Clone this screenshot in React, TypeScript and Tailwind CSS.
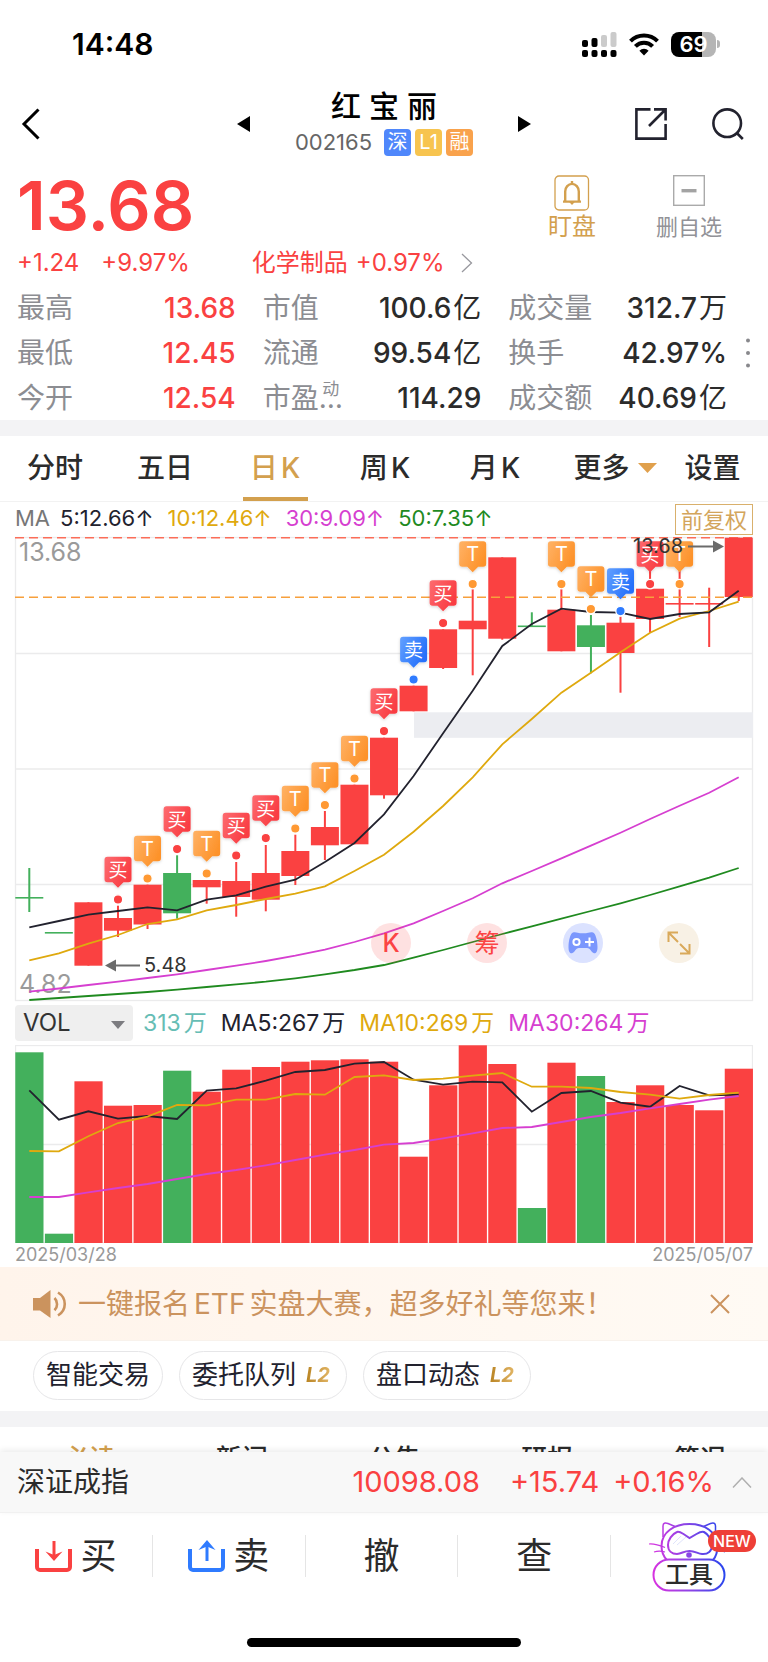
import React, { useState } from "react";

const RED = "#fa4141";
const GREEN = "#43b05c";
const INK = "#22222e";
const GOLD = "#dfa90e";
const PINK = "#d63fd0";
const DEEP_GREEN = "#1f8a1f";

interface Candle {
  top: number;
  bottom: number;
  high: number;
  low: number;
  up: boolean;
}

const c = (top: number, bottom: number, high: number, low: number, up = true): Candle => ({ top, bottom, high, low, up });

const candles: Candle[] = [
  c(360, 361, 331, 375, false),
  c(395, 396, 395, 396, false),
  c(365.3, 428.7, 365.3, 428.7),
  c(381, 393.7, 368.7, 400),
  c(347.7, 387.5, 347.7, 392),
  c(336, 376.3, 318.3, 381.7, false),
  c(343, 350.3, 343, 366.7),
  c(344, 360, 325, 379.7),
  c(336, 362.7, 308, 374.3),
  c(314, 339, 297.7, 348),
  c(290, 308.3, 274, 323),
  c(247.7, 307.3, 247.7, 307.3),
  c(200.7, 258.3, 200.7, 261.7),
  c(148.7, 174.3, 148.7, 174.3),
  c(92.3, 131, 92.3, 132),
  c(83.7, 92.3, 51.3, 138.3),
  c(20.3, 101.7, 20.3, 102.7),
  c(88.5, 89.5, 75.3, 89, false),
  c(72.7, 114.3, 51.3, 114.3),
  c(88.3, 110, 78, 136.3, false),
  c(85.7, 116, 79.7, 155.7),
  c(51.7, 82, 34, 95.7),
  c(66, 67, 34, 80),
  c(66, 67, 50.7, 110),
  c(0.7, 60, 0.7, 64),
];

const ma5 = [390.3, 384, 377.7, 374, 370.3, 373.3, 362.7, 358.3, 349.7, 342.7, 325, 306, 277.3, 239, 196.3, 153.7, 109, 87, 71.7, 75, 75.7, 82, 77, 75.3, 53.7];
const ma10 = [423.3, 416.3, 406.7, 398, 387, 382.3, 373.3, 368, 362, 356.7, 349.3, 334, 317.7, 294.7, 269, 240.3, 207.3, 182, 155.7, 135.7, 115.3, 95.7, 81.7, 74, 64.7];
const ma30 = [454.7, 451.5, 448, 444.7, 441, 437.3, 433, 428.7, 424, 418.7, 412.7, 405, 396.3, 386.3, 374, 361.3, 346.3, 334, 321.3, 308.7, 295.7, 282, 268.7, 255.7, 240.3];
const ma50 = [463, 461, 459, 457, 455, 452.7, 450, 447.3, 444.7, 441.3, 437.3, 433, 428, 420.7, 413, 405, 397, 389.3, 381.7, 374, 366.3, 358, 349.3, 340.7, 331];

type MarkKind = "买" | "卖" | "T";

const marks: { i: number; y: number; kind: MarkKind }[] = [
  { i: 3, y: 319.7, kind: "买" },
  { i: 4, y: 298.7, kind: "T" },
  { i: 5, y: 269.3, kind: "买" },
  { i: 6, y: 293.7, kind: "T" },
  { i: 7, y: 275.7, kind: "买" },
  { i: 8, y: 258.3, kind: "买" },
  { i: 9, y: 248.7, kind: "T" },
  { i: 10, y: 225.3, kind: "T" },
  { i: 11, y: 198.7, kind: "T" },
  { i: 12, y: 151.3, kind: "买" },
  { i: 13, y: 99.7, kind: "卖" },
  { i: 14, y: 43.3, kind: "买" },
  { i: 15, y: 4.3, kind: "T" },
  { i: 18, y: 4.3, kind: "T" },
  { i: 19, y: 29.3, kind: "T" },
  { i: 20, y: 31.3, kind: "卖" },
  { i: 21, y: 4.3, kind: "买" },
  { i: 22, y: 4.3, kind: "T" },
];

const markStyle = {
  "买": { fill: "url(#markBuy)", dot: "#fa4141" },
  "卖": { fill: "url(#markSell)", dot: "#2f7bff" },
  T: { fill: "url(#markT)", dot: "#ff9933" },
};

const volTops = [7.3, 188.7, 36.3, 60.7, 60, 25.7, 46.7, 24.7, 22, 16.7, 15.3, 14.3, 16.7, 111.7, 40.3, 0.3, 19, 163, 17.7, 31, 57, 40.3, 60, 65.3, 23.7];
const volMa5 = [45.3, 74.7, 66.3, 73.7, 71, 74, 45.7, 43.3, 35.7, 27, 25, 18.7, 17, 34.7, 39.7, 36.7, 37.3, 66.7, 48, 46, 57.7, 61.7, 41, 50.3, 49.7];
const volMa10 = [106, 106.3, 91.3, 78, 71.7, 60, 60.3, 54.7, 54.7, 49, 49.7, 32, 30.3, 35, 33.7, 30.7, 28, 41.7, 41.7, 43, 47, 49.7, 53.7, 50, 47.7];
const volMa30 = [152, 152, 147.3, 143, 139, 134, 129, 125, 120.3, 115, 109.7, 105, 99.7, 98, 93.3, 88.3, 83, 82, 77, 72, 68, 63.3, 59, 54.7, 51];

const xAt = (i: number) => 14.3 + i * 29.56;
const toPoints = (ys: number[]) => ys.map((y, i) => `${xAt(i).toFixed(1)},${y}`).join(" ");

const stats = [
  { label: "最高", value: "13.68", red: true },
  { label: "市值", value: "100.6", unit: "亿" },
  { label: "成交量", value: "312.7", unit: "万" },
  { label: "最低", value: "12.45", red: true },
  { label: "流通", value: "99.54", unit: "亿" },
  { label: "换手", value: "42.97%" },
  { label: "今开", value: "12.54", red: true },
  { label: "市盈", value: "114.29", sup: "动" },
  { label: "成交额", value: "40.69", unit: "亿" },
];

function StatusBar() {
  return (
    <div className="flex h-[88px] items-center justify-between pl-[72px] pr-12">
      <span className="text-[30px] font-semibold leading-8 text-black">14:48</span>
      <div className="flex items-center gap-3">
        <svg width="35" height="25" viewBox="0 0 35 25">
          <rect x="0" y="8" width="6" height="7" rx="2" />
          <rect x="9.5" y="6" width="6" height="9" rx="2" />
          <rect x="19" y="3" width="6" height="12" rx="2" fill="#cbcbcb" />
          <rect x="28.5" y="0" width="6" height="15" rx="2" fill="#cbcbcb" />
          {[0, 9.5, 19, 28.5].map((x) => (
            <rect key={x} x={x} y="18" width="6" height="7" rx="2" />
          ))}
        </svg>
        <svg width="30" height="23" viewBox="0 0 30 23" fill="none" stroke="#000" strokeWidth="4">
          <path d="M1.5 8.2a19 19 0 0 1 27 0" />
          <path d="M6.4 13.3a12 12 0 0 1 17.2 0" />
          <path d="M15 22.6l-4.6-4.8a6.4 6.4 0 0 1 9.2 0z" fill="#000" stroke="none" />
        </svg>
        <div className="flex items-center gap-px">
          <div className="flex h-[25px] w-[45px] items-center justify-center rounded-lg bg-linear-to-r from-black from-69% to-[#b5b5b5] to-69% text-[22px] font-semibold leading-6 text-white">
            69
          </div>
          <span className="h-2 w-[3px] rounded-r-full bg-[#b5b5b5]" />
        </div>
      </div>
    </div>
  );
}

function Header() {
  return (
    <header className="grid h-[77px] grid-cols-[1fr_268px_1fr] text-black">
      <div className="flex items-center justify-between pb-[5px] pl-[21px]">
        <button aria-label="返回">
          <svg width="20" height="32" viewBox="0 0 20 32" fill="none" stroke="#000" strokeWidth="3">
            <path d="M17.5 1.5L3 16l14.5 14.5" />
          </svg>
        </button>
        <button aria-label="上一只">
          <svg width="13" height="16" viewBox="0 0 13 16"><path d="M13 0v16L0 8z" /></svg>
        </button>
      </div>
      <div className="flex flex-col items-center">
        <h1 className="text-[30px] font-medium leading-9">红 宝 丽</h1>
        <div className="mt-1 flex items-center gap-1 text-[20px] leading-7 text-white">
          <span className="mr-2 text-[22px] text-[#666]">002165</span>
          <span className="flex size-[27px] items-center justify-center rounded-sm bg-[#4f87fb]">深</span>
          <span className="flex size-[27px] items-center justify-center rounded-sm bg-[#f7c44f]">L1</span>
          <span className="flex size-[27px] items-center justify-center rounded-sm bg-[#f9a24c]">融</span>
        </div>
      </div>
      <div className="flex items-center justify-between pb-[5px] pr-6">
        <button aria-label="下一只">
          <svg width="13" height="16" viewBox="0 0 13 16"><path d="M0 0v16l13-8z" /></svg>
        </button>
        <div className="flex items-center gap-[45px]">
          <button aria-label="分享">
            <svg width="32" height="32" viewBox="0 0 32 32" fill="none" stroke="#22222e" strokeWidth="2.6">
              <path d="M15.5 1.4H1.4v29.2h29.2V16" />
              <path d="M19 1.4h11.6V12.6M30 2L14 18" />
            </svg>
          </button>
          <button aria-label="搜索">
            <svg width="32" height="32" viewBox="0 0 32 32" fill="none" stroke="#22222e" strokeWidth="2.6">
              <circle cx="15.2" cy="15.2" r="13.8" />
              <path d="M24.8 25l6 6" />
            </svg>
          </button>
        </div>
      </div>
    </header>
  );
}

function Quote() {
  return (
    <section className="pl-[17px]">
      <div className="flex h-20 justify-between pr-[46px]">
        <span className="text-[68px] font-semibold leading-20 text-[#fa4141]">13.68</span>
        <div className="flex items-start gap-[60px] pt-[10px]">
          <button className="flex flex-col items-center text-[24px] leading-8 text-[#d3a04e]">
            <svg width="36" height="36" viewBox="0 0 36 36" fill="none" stroke="#d3a04e">
              <rect x="1" y="1" width="33.5" height="34" rx="4" strokeWidth="1.3" />
              <path d="M9 26.6h18M11.2 26v-9.5a6.8 7.6 0 0 1 13.6 0V26" strokeWidth="2.4" />
              <path d="M18 6v3" strokeWidth="2.4" />
              <path d="M15.2 27h5.6l-2.8 3z" fill="#d3a04e" stroke="none" />
            </svg>
            盯盘
          </button>
          <button className="flex flex-col items-center text-[22px] leading-8 text-[#929297]">
            <svg width="32" height="36" viewBox="0 0 32 36">
              <rect x="0.7" y="0.7" width="30.6" height="29.6" fill="none" stroke="#aaa" strokeWidth="1.4" />
              <rect x="8.5" y="14" width="15" height="3.4" fill="#a3a3a3" />
            </svg>
            删自选
          </button>
        </div>
      </div>
      <div className="mt-[2px] flex items-center text-[24px] leading-8 text-[#fa4141]">
        <span>+1.24</span>
        <span className="ml-[22px]">+9.97%</span>
        <a href="#sector" className="ml-[62px] flex items-center gap-2">
          <span>化学制品</span>
          <span>+0.97%</span>
          <svg className="ml-2" width="12" height="20" viewBox="0 0 12 20" fill="none" stroke="#98989e" strokeWidth="1.3">
            <path d="M1 1l9.5 9L1 19" />
          </svg>
        </a>
      </div>
      <div className="mt-[6px] flex items-center">
        <dl className="grid flex-1 grid-cols-3 gap-x-[27px]">
          {stats.map((s) => (
            <div key={s.label} className="flex h-[45px] items-center justify-between text-[28px] leading-8">
              <dt className="flex text-[#8c8d92]">
                {s.label}
                {s.sup && (
                  <span className="flex flex-col items-center leading-[4px]">
                    <span className="text-[17px] leading-[14px]">{s.sup}</span>
                    …
                  </span>
                )}
              </dt>
              <dd className={s.red ? "font-medium text-[#fa4141]" : "font-medium text-[#2b2b2b]"}>
                {s.value}
                {s.unit && <span className="ml-[2px] font-normal">{s.unit}</span>}
              </dd>
            </div>
          ))}
        </dl>
        <button aria-label="更多数据" className="flex w-[41px] justify-center">
          <svg width="4" height="30" viewBox="0 0 4 30" fill="#88888c">
            <circle cx="2" cy="2.5" r="2" />
            <circle cx="2" cy="15" r="2" />
            <circle cx="2" cy="27.5" r="2" />
          </svg>
        </button>
      </div>
    </section>
  );
}

function PeriodTabs() {
  const [active, setActive] = useState("日K");
  const items = ["分时", "五日", "日K", "周K", "月K", "更多", "设置"];

  return (
    <nav className="grid h-[66px] grid-cols-[110fr_110fr_110fr_110fr_110fr_130fr_65fr] border-b border-[#f2f2f2] pr-[23px] text-[28px] font-medium leading-8">
      {items.map((t) => (
        <button
          key={t}
          onClick={() => setActive(t)}
          className={`flex flex-col items-center justify-between pt-4 ${t === active ? "text-[#d3a04e]" : "text-[#2b2b2b]"}`}
        >
          <span className="flex items-center gap-2 whitespace-nowrap">
            {t.endsWith("K") ? (
              <span className="flex gap-[3px]">
                <span>{t[0]}</span>
                <span>K</span>
              </span>
            ) : (
              t
            )}
            {t === "更多" && (
              <svg width="19" height="10" viewBox="0 0 19 10"><path d="M0 0h19l-9.5 10z" fill="#e0a04c" /></svg>
            )}
          </span>
          <span className={`h-1 w-[65px] ${t === active ? "bg-[#d3a04e]" : "bg-transparent"}`} />
        </button>
      ))}
    </nav>
  );
}

function KChart() {
  return (
    <svg className="block h-auto w-full overflow-visible" viewBox="0 0 738 464">
      <defs>
        <linearGradient id="markBuy" x1="0" x2="1" y1="0" y2="0.5">
          <stop offset="0" stopColor="#fd6b70" />
          <stop offset="1" stopColor="#f93c42" />
        </linearGradient>
        <linearGradient id="markSell" x1="0" x2="1" y1="0" y2="0.5">
          <stop offset="0" stopColor="#62a0ff" />
          <stop offset="1" stopColor="#2570fb" />
        </linearGradient>
        <linearGradient id="markT" x1="0" x2="1" y1="0" y2="0.5">
          <stop offset="0" stopColor="#ffb266" />
          <stop offset="1" stopColor="#fd9229" />
        </linearGradient>
        <filter id="soft" x="-30%" y="-30%" width="160%" height="160%">
          <feDropShadow dx="0" dy="1" stdDeviation="1.5" floodOpacity="0.18" />
        </filter>
      </defs>

      <g stroke="#ebebec" strokeWidth="1.3" fill="none">
        <rect x="0.5" y="0.5" width="737" height="463" />
        <path d="M0 116.5h738M0 232h738M0 347.5h738" />
      </g>
      <rect x="399" y="175.3" width="339" height="25.5" fill="#ecedf1" />
      <path d="M0 0.8h738" stroke="#fb6d58" strokeWidth="1.6" strokeDasharray="9 5" />

      <text x="4" y="23.5" fontSize="25" fill="#9a9a9a">13.68</text>
      <text x="4" y="456" fontSize="25" fill="#9a9a9a">4.82</text>

      {candles.map((k, i) => (
        <g key={i} fill={k.up ? RED : GREEN}>
          <rect x={xAt(i) - 1} y={k.high} width="2" height={k.low - k.high} />
          <rect x={xAt(i) - 14} y={k.top} width="28" height={Math.max(k.bottom - k.top, 1.6)} />
        </g>
      ))}
      <path d="M0 60.3h738" stroke="#f7a03c" strokeWidth="1.6" strokeDasharray="9 5" />

      <g fill="none" strokeWidth="1.8">
        <polyline points={toPoints(ma50)} stroke={DEEP_GREEN} />
        <polyline points={toPoints(ma30)} stroke={PINK} />
        <polyline points={toPoints(ma10)} stroke={GOLD} />
        <polyline points={toPoints(ma5)} stroke={INK} />
      </g>

      {marks.map((m) => (
        <g key={m.i} transform={`translate(${xAt(m.i).toFixed(1)} ${m.y})`}>
          <path
            d="M-10.5 0h21a3 3 0 0 1 3 3v19.5a3 3 0 0 1-3 3H5.5L0 31l-5.5-5.5H-10.5a3 3 0 0 1-3-3V3a3 3 0 0 1 3-3z"
            fill={markStyle[m.kind].fill}
            filter="url(#soft)"
          />
          <text x="0" y={m.kind === "T" ? 20 : 20.5} textAnchor="middle" fontSize={m.kind === "T" ? 20 : 19} fill="#fff">
            {m.kind}
          </text>
          <circle cx="0" cy="42.8" r="4.7" fill={markStyle[m.kind].dot} stroke="#fff" strokeWidth="1.3" />
        </g>
      ))}

      <g stroke="#6b6b6b" strokeWidth="2" fill="#6b6b6b">
        <path d="M100 428.5h25" />
        <path d="M90 428.5l11-6v12z" stroke="none" />
        <path d="M673 9.5h26" />
        <path d="M709 9.5l-11-6v12z" stroke="none" />
      </g>
      <text x="129" y="434.5" fontSize="20" fill="#333">5.48</text>
      <text x="618" y="15.5" fontSize="20" fill="#333">13.68</text>
    </svg>
  );
}

function VolChart() {
  return (
    <svg className="block h-auto w-full" viewBox="0 0 738 198">
      <g stroke="#ebebec" strokeWidth="1.3" fill="none">
        <rect x="0.5" y="0.5" width="737" height="197" />
        <path d="M0 99.5h738" />
      </g>
      {volTops.map((y, i) => (
        <rect key={i} x={xAt(i) - 14} y={y} width="28.2" height={198 - y} fill={candles[i].up ? RED : GREEN} />
      ))}
      <g fill="none" strokeWidth="1.8">
        <polyline points={toPoints(volMa5)} stroke={INK} />
        <polyline points={toPoints(volMa10)} stroke={GOLD} />
        <polyline points={toPoints(volMa30)} stroke={PINK} />
      </g>
    </svg>
  );
}

function FloatingTools() {
  return (
    <div className="absolute bottom-[38px] right-[54px] flex gap-14 text-[25px] leading-8 text-[#fb4444]">
      <button className="flex size-10 items-center justify-center rounded-full bg-[#fb4444]/16 font-medium">K</button>
      <button className="flex size-10 items-center justify-center rounded-full bg-[#fb4444]/16">筹</button>
      <button aria-label="游戏" className="flex size-10 items-center justify-center rounded-full bg-[#dbe2ff]">
        <svg width="30" height="22" viewBox="0 0 30 22">
          <path d="M5 .5c3-.8 5.5.8 7 .8h6c1.5 0 4-1.6 7-.8 2.4.8 4.5 7.5 4.5 14.5 0 5-1.5 6.5-3.5 6.2-2.5-.4-3.5-5.2-7-5.2h-8c-3.5 0-4.5 4.8-7 5.2C2 21.5.5 20 .5 15 .5 8 2.6 1.3 5 .5z" fill="#7b97fd" />
          <circle cx="8.5" cy="10" r="3.1" fill="none" stroke="#fff" strokeWidth="2" />
          <path d="M21.5 5.5v9M17 10h9" stroke="#fff" strokeWidth="2" />
        </svg>
      </button>
      <button aria-label="全屏" className="flex size-10 items-center justify-center rounded-full bg-[#f8f1e5]">
        <svg width="24" height="24" viewBox="0 0 24 24" fill="none" stroke="#d9a95a" strokeWidth="2">
          <path d="M1.5 11V1.5H11M2 2l9 9M22.5 13v9.5H13M22 22l-9-9" />
        </svg>
      </button>
    </div>
  );
}

function VolValue({ text, className }: { text: string; className: string }) {
  return (
    <span className={className}>
      {text}
      <span className="ml-[3px]">万</span>
    </span>
  );
}

function Charts() {
  const [indicator, setIndicator] = useState("VOL");

  return (
    <section className="px-[15px]">
      <div className="flex h-[35px] items-center justify-between text-[22px] leading-8">
        <div className="flex gap-[14px] pb-1">
          <span className="text-[#22222e]">
            <span className="mr-[10px] text-[#777]">MA</span>
            5:12.66↑
          </span>
          <span className="text-[#dfa90e]">10:12.46↑</span>
          <span className="text-[#d63fd0]">30:9.09↑</span>
          <span className="text-[#1f8a1f]">50:7.35↑</span>
        </div>
        <button className="h-[31px] border border-[#d9b06c] px-[5px] leading-7 text-[#d3a55c]">前复权</button>
      </div>

      <div className="relative">
        <KChart />
        <FloatingTools />
      </div>

      <div className="flex h-11 items-center gap-[14px] text-[23px] leading-8">
        <div className="relative -mr-1">
          <select
            aria-label="指标"
            value={indicator}
            onChange={(e) => setIndicator(e.target.value)}
            className="h-9 w-[118px] appearance-none rounded bg-[#efefef] pl-2 text-[24px] text-[#333] outline-none"
          >
            <option>VOL</option>
            <option>MACD</option>
            <option>KDJ</option>
          </select>
          <svg className="pointer-events-none absolute right-2 top-4" width="14" height="8" viewBox="0 0 14 8">
            <path d="M0 0h14L7 8z" fill="#7c7c80" />
          </svg>
        </div>
        <VolValue text="313" className="text-[#66bdb5]" />
        <VolValue text="MA5:267" className="text-[#22222e]" />
        <VolValue text="MA10:269" className="text-[#dfa90e]" />
        <VolValue text="MA30:264" className="text-[#d63fd0]" />
      </div>

      <VolChart />
      <div className="flex h-6 justify-between text-[18px] leading-6 text-[#999]">
        <span>2025/03/28</span>
        <span>2025/05/07</span>
      </div>
    </section>
  );
}

function Notice() {
  return (
    <div className="flex h-[74px] items-center border-b border-[#f8f2ec] bg-linear-to-r from-[#fff4eb] to-[#fffaf4] pl-[33px] pr-[38px] text-[#cb935e]">
      <svg width="35" height="28" viewBox="0 0 35 28" fill="none" stroke="#cb935e" strokeWidth="2.6">
        <path d="M0 8h7L17.5 0v28L7 20.5H0z" fill="#cb935e" stroke="none" />
        <path d="M21.5 8c3.4 3.3 3.4 9 0 12.3M25 2.5c9 5.5 9 17.5 0 23" />
      </svg>
      <p className="ml-[10px] text-[28px] leading-9">
        一键报名<span className="mx-1">ETF</span>实盘大赛，超多好礼等您来！
      </p>
      <button aria-label="关闭" className="ml-auto">
        <svg width="20" height="20" viewBox="0 0 20 20" fill="none" stroke="#cb935e" strokeWidth="2">
          <path d="M1 1l18 18M19 1L1 19" />
        </svg>
      </button>
    </div>
  );
}

function Chip({ text, level }: { text: string; level?: boolean }) {
  return (
    <button className="flex h-[49px] items-center gap-[10px] rounded-full border border-[#e6e6e8] px-3 text-[26px] leading-8 text-[#22222e]">
      {text}
      {level && (
        <span className="bg-linear-to-r from-[#b98420] to-[#e8bd6d] bg-clip-text pr-1 text-[20px] font-bold italic text-transparent">L2</span>
      )}
    </button>
  );
}

function Footer() {
  return (
    <footer className="fixed inset-x-0 bottom-0 bg-white">
      <a href="#index" className="flex h-[61px] items-center border-b border-[#f1f1f1] bg-[#f8f8f8] pl-[17px] pr-4 text-[29px] leading-8 text-[#fa4141] shadow-[0_-2px_6px_rgba(0,0,0,0.08)]">
        <span className="text-[28px] text-[#2b2b2b]">深证成指</span>
        <span className="ml-auto">10098.08</span>
        <span className="ml-[30px]">+15.74</span>
        <span className="ml-[14px]">+0.16%</span>
        <svg className="ml-[18px]" width="20" height="11" viewBox="0 0 20 11" fill="none" stroke="#b0b0b0" strokeWidth="1.5">
          <path d="M1 10.5L10 1l9 9.5" />
        </svg>
      </a>
      <nav className="grid h-[85px] grid-cols-5 items-center pr-1 text-[36px] leading-[42px] text-[#2b2b2b]">
        <button className="flex items-center justify-center gap-2 border-r border-[#e5e5e5]">
          <svg width="37" height="32" viewBox="0 0 37 32" fill="none" stroke="#fa4141" strokeWidth="4">
            <path d="M2 9v18a3 3 0 0 0 3 3h27a3 3 0 0 0 3-3V9" />
            <path d="M19 1v16" strokeWidth="3" />
            <path d="M10.5 11.5l8.5 9.5 8.5-9.5-8.5 3.5z" fill="#fa4141" stroke="none" />
          </svg>
          买
        </button>
        <button className="flex items-center justify-center gap-2 border-r border-[#e5e5e5]">
          <svg width="37" height="32" viewBox="0 0 37 32" fill="none" stroke="#2f7bff" strokeWidth="4">
            <path d="M2 9v18a3 3 0 0 0 3 3h27a3 3 0 0 0 3-3V9" />
            <path d="M19 5v16" strokeWidth="3" />
            <path d="M10.5 10L19 0l8.5 10L19 6.5z" fill="#2f7bff" stroke="none" />
          </svg>
          卖
        </button>
        <button className="border-r border-[#e5e5e5]">撤</button>
        <button className="border-r border-[#e5e5e5]">查</button>
        <button className="relative flex h-[72px] flex-col items-center justify-end">
          <svg width="78" height="70" viewBox="0 0 78 70" fill="none" strokeWidth="2">
            <defs>
              <linearGradient id="cat" gradientUnits="userSpaceOnUse" x1="4" x2="76" y1="40" y2="34">
                <stop offset="0" stopColor="#d633e0" />
                <stop offset="0.5" stopColor="#8a45e6" />
                <stop offset="1" stopColor="#2446ee" />
              </linearGradient>
            </defs>
            <g stroke="url(#cat)">
              <path d="M18 38c-4-4-5.5-10-5.5-14 0-14 13-22 28-22s28 8 28 22c0 4-1 10-4.5 14" />
              <path d="M14 15V4c0-3 2-3.5 5-2.5l7 3M66.5 15V4c0-3-2-3.5-5-2.5l-7 3" strokeWidth="1.5" />
              <path d="M28 10c-5 2-9 8-9 13 0 6 4 9 9 9 5-.5 7-3 12.5-3s8 2.5 12.5 3c6 .5 10-3 10-9 0-5-4-11-8-13-2-1-5 .5-7.5 2l-7 4-6-4c-2.5-1.5-5-2.8-6.5-2z" />
              <path d="M24 22l8-8M28 23l9-8" stroke="#dfe3fb" strokeWidth="1" />
              <rect x="4.5" y="37.5" width="71" height="31" rx="15.5" fill="#fff" />
              <path d="M0 22c6-.5 10 1 16 3.5M5 30c4-1.5 8-1 11 0M68 28c3 0 6 1 8 2" strokeWidth="1.2" />
              <circle cx="40" cy="33" r="1.8" fill="#8a45e6" />
            </g>
            <text x="40" y="61" textAnchor="middle" fontSize="24" fontWeight="500" fill="#2b2b2b">工具</text>
          </svg>
          <span className="absolute right-2 top-[10px] flex h-[22px] w-12 items-center justify-center rounded-full bg-[#ee3f37] text-[16px] font-medium leading-5 text-white">
            NEW
          </span>
        </button>
      </nav>
      <div className="flex h-16 items-end justify-center pb-[15px]">
        <span className="h-[9px] w-[274px] rounded-full bg-black" />
      </div>
    </footer>
  );
}

export default function App() {
  return (
    <div className="min-h-screen bg-white font-['Inter','Noto_Sans_CJK_SC',sans-serif]">
      <StatusBar />
      <Header />
      <Quote />
      <div className="h-4 bg-[#f3f3f5]" />
      <PeriodTabs />
      <Charts />
      <Notice />
      <div className="flex h-[70px] items-center gap-4 pb-[2px] pl-[33px]">
        <Chip text="智能交易" />
        <Chip text="委托队列" level />
        <Chip text="盘口动态" level />
      </div>
      <div className="h-4 bg-[#f3f3f5]" />
      <nav className="flex justify-between pl-[63px] pr-[42px] pt-[14px] text-[26px] font-medium leading-9 text-[#2b2b2b]">
        <button className="text-[#d3a04e]">必读</button>
        <button>新闻</button>
        <button>公告</button>
        <button>研报</button>
        <button>简况</button>
      </nav>
      <Footer />
    </div>
  );
}
